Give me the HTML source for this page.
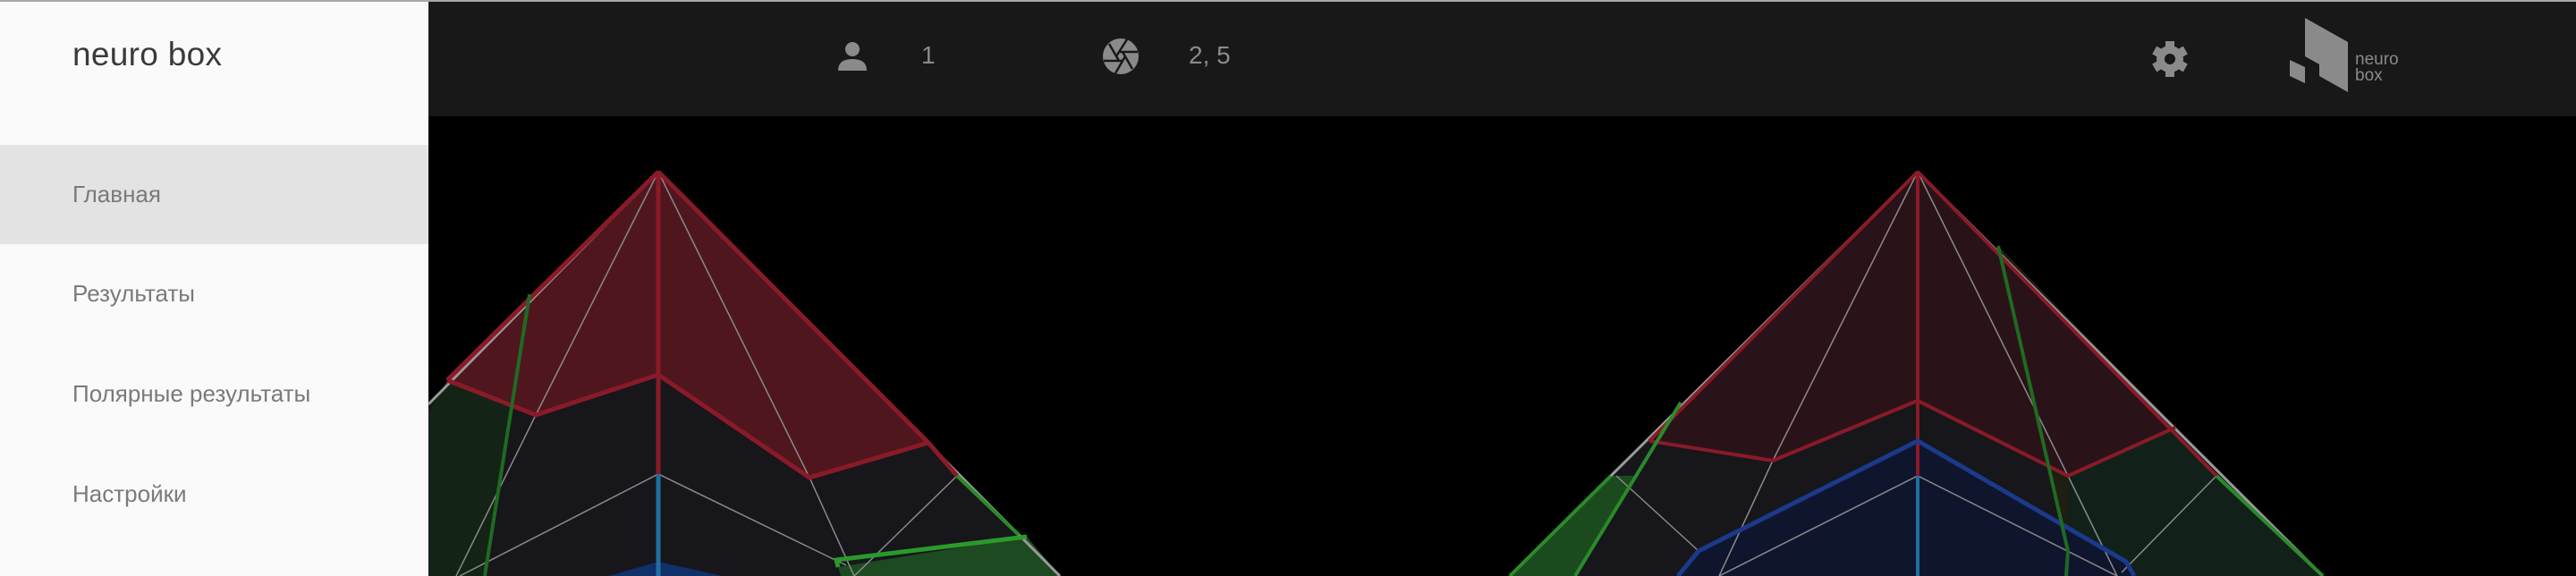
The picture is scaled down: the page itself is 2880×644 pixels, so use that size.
<!DOCTYPE html>
<html style="overflow:hidden"><head><meta charset="utf-8"><style>
*{margin:0;padding:0;box-sizing:border-box}
html,body{width:2880px;height:644px;overflow:hidden}
body{background:#000;font-family:"Liberation Sans",sans-serif;position:relative}
#top{position:absolute;left:0;top:0;width:2880px;height:2px;background:#a8a8a8;z-index:5}
#side{position:absolute;left:0;top:0;width:479px;height:644px;background:#fafafa;overflow:hidden}
#side .brand{position:absolute;left:81px;top:40px;font-size:37px;color:#3a3a3a;letter-spacing:0.3px}
#side .item{position:absolute;left:0;width:479px;height:111px;font-size:26px;color:#7a7a7a;padding-left:81px;line-height:111px}
#side .act{background:#e3e3e3}
#hdr{position:absolute;left:479px;top:0;width:2401px;height:130px;background:#181818}
.t{position:absolute;font-size:28px;color:#8a8a8a;line-height:32px}
svg{position:absolute;display:block}
</style></head><body>
<div id="top"></div>
<div id="side">
<div class="brand">neuro box</div>
<div class="item act" style="top:162px">Главная</div>
<div class="item" style="top:273px">Результаты</div>
<div class="item" style="top:385px">Полярные результаты</div>
<div class="item" style="top:497px">Настройки</div>
</div>
<div id="hdr"></div>
<svg style="left:0;top:0" width="2880" height="644" viewBox="0 0 2880 644">
<circle cx="953" cy="55" r="8" fill="#8a8a8a"/>
<path d="M937 79 Q937 66 953 66 Q969 66 969 79 Z" fill="#8a8a8a"/>
<circle cx="1253" cy="63" r="20" fill="#8a8a8a"/>
<g stroke="#181818" stroke-width="2.5">
<line x1="1260" y1="44" x2="1248" y2="63"/><line x1="1272" y1="58" x2="1251" y2="58"/>
<line x1="1266" y1="77" x2="1255" y2="58"/><line x1="1247" y1="82" x2="1258" y2="63"/>
<line x1="1234" y1="68" x2="1255" y2="68"/><line x1="1240" y1="49" x2="1251" y2="68"/>
</g>
<g transform="translate(2426,66)" fill="#8a8a8a">
<circle r="15"/>
<rect x="-5" y="-20" width="10" height="40"/>
<rect x="-5" y="-20" width="10" height="40" transform="rotate(60)"/>
<rect x="-5" y="-20" width="10" height="40" transform="rotate(120)"/>
<circle r="6" fill="#181818"/>
</g>
<polygon points="2577,20 2625,47 2625,103 2593,85 2593,72 2577,63" fill="#8a8a8a"/>
<polygon points="2560,67 2577,75 2577,93 2560,85" fill="#8a8a8a"/>
<text x="2633" y="72" font-size="19" fill="#8a8a8a" font-family="Liberation Sans">neuro</text>
<text x="2633" y="90" font-size="19" fill="#8a8a8a" font-family="Liberation Sans">box</text>

<g>
<polygon points="736,192 479,452 479,644 1185,644" fill="#16161b"/>
<polygon points="480,460 500,425 570,452 542,644 480,644" fill="#132416"/>
<polygon points="736,192 500,425 599,464 736,419 905,534 1038,495" fill="#4f161e"/>
<polygon points="937,634 1148,600 1185,644 940,644" fill="#1d4a20"/>
<polygon points="680,644 736,628 808,644" fill="#10306a"/>
<g stroke="#8a8a8a" stroke-width="1.5" fill="none">
<polyline points="736,192 599,464 510,644"/>
<polyline points="736,192 905,534 955,644"/>
<polyline points="514,644 736,530 946,632"/>
<polyline points="1070,532 955,644"/>
</g>
<g stroke="#9a9a9a" stroke-width="3" fill="none">
<line x1="736" y1="192" x2="479" y2="452"/>
<line x1="736" y1="192" x2="1185" y2="644"/>
</g>
<g stroke="#8a1a28" stroke-width="5" fill="none">
<line x1="736" y1="192" x2="1038" y2="495"/>
<line x1="736" y1="192" x2="500" y2="425"/>
<polyline points="500,425 599,464 736,419 905,534 1038,495"/>
<line x1="1038" y1="495" x2="1070" y2="532"/>
<line x1="736" y1="192" x2="736" y2="530"/>
</g>
<line x1="736" y1="530" x2="736" y2="644" stroke="#1f6f9f" stroke-width="5"/>
<line x1="592" y1="329" x2="542" y2="644" stroke="#1f6a22" stroke-width="4"/>
<line x1="1070" y1="532" x2="1139" y2="598" stroke="#2a8a2a" stroke-width="4"/>
<polyline points="937,634 935,626 1148,600" stroke="#2a9a2a" stroke-width="5" fill="none"/>
</g>

<g>
<polygon points="2144,192 1688,644 2597,644" fill="#16161b"/>
<polygon points="2234,275 2312,616 2312,532 2432,478" fill="#1e1e12"/>
<polygon points="2312,532 2432,478 2478,532 2597,644 2312,644" fill="#12201a"/>
<polygon points="2144,192 1844,493 1982,515 2144,448 2312,532 2432,478" fill="#2a1318"/>
<polygon points="2144,493 1899,616 1876,644 2386,644 2377,628" fill="#10152e"/>
<polygon points="1801,532 1829,532 1761,644 1688,644" fill="#1b4a1f"/>
<g stroke="#8a8a8a" stroke-width="1.5" fill="none">
<polyline points="2144,192 1982,515 1922,644"/>
<polyline points="2144,192 2312,532 2367,644"/>
<polyline points="1922,644 2144,532 2367,644"/>
<polyline points="2478,532 2372,640"/>
<polyline points="1807,532 1899,616"/>
</g>
<g stroke="#9a9a9a" stroke-width="3" fill="none">
<line x1="2144" y1="192" x2="1688" y2="644"/>
<line x1="2144" y1="192" x2="2597" y2="644"/>
</g>
<g stroke="#8a1a28" stroke-width="4" fill="none">
<line x1="2144" y1="192" x2="1844" y2="493"/>
<line x1="2144" y1="192" x2="2478" y2="532"/>
<polyline points="1844,493 1982,515 2144,448 2312,532 2432,478"/>
<line x1="2144" y1="192" x2="2144" y2="532"/>
</g>
<line x1="2144" y1="532" x2="2144" y2="644" stroke="#1f6f9f" stroke-width="4"/>
<polyline points="1876,644 1899,616 2144,493 2377,628 2386,644" stroke="#1a3a8a" stroke-width="5" fill="none"/>
<line x1="1879" y1="450" x2="1761" y2="644" stroke="#2a8a2a" stroke-width="4"/>
<polyline points="2234,275 2312,616 2310,644" stroke="#1f6a22" stroke-width="4" fill="none"/>
<line x1="2478" y1="532" x2="2597" y2="644" stroke="#2a8a2a" stroke-width="4"/>
<line x1="1801" y1="532" x2="1688" y2="644" stroke="#2a8a2a" stroke-width="4"/>
</g>
</svg>
<div class="t" style="left:1030px;top:46px">1</div>
<div class="t" style="left:1329px;top:46px">2, 5</div>
</body></html>
